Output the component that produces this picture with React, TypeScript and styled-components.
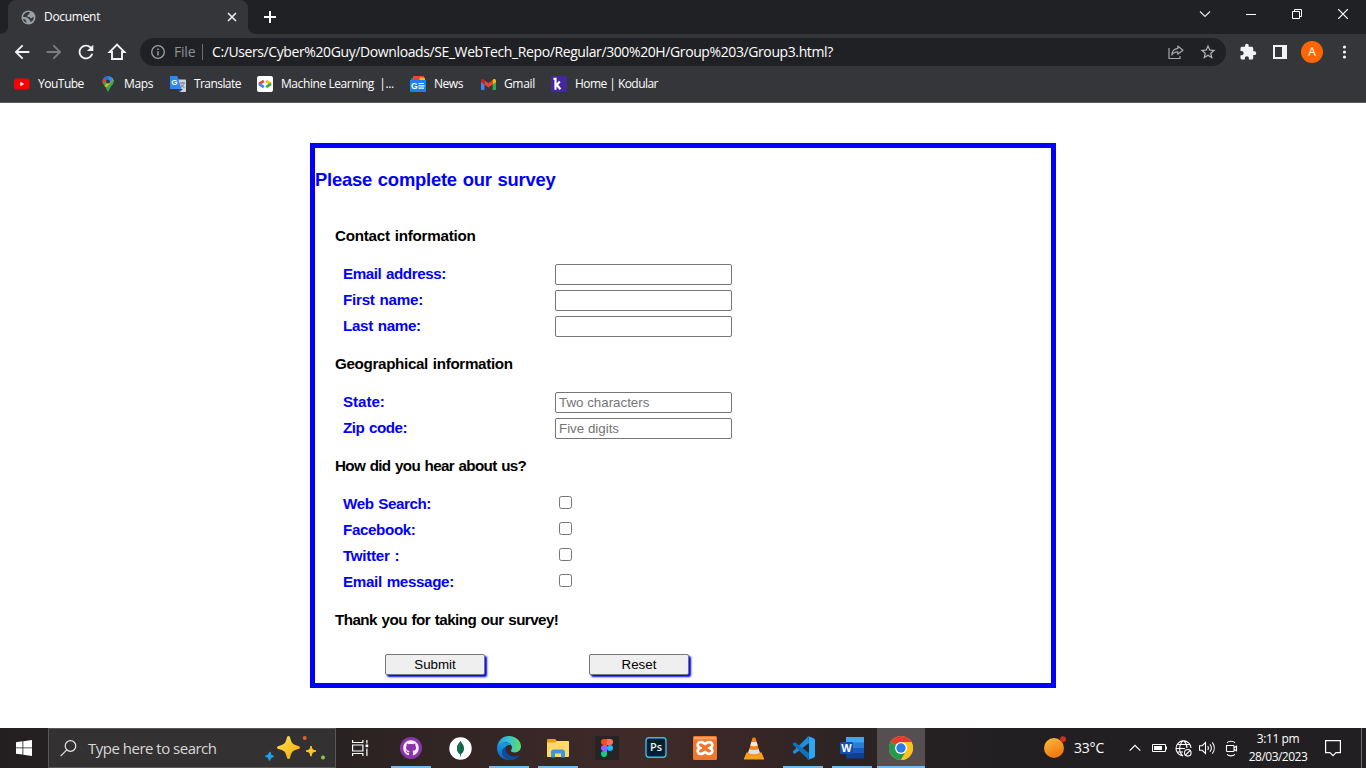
import React from 'react';
import styled, { createGlobalStyle } from 'styled-components';
import { FaGithub } from 'react-icons/fa';
import { MdExtension, MdStarBorder, MdRefresh, MdArrowBack, MdArrowForward } from 'react-icons/md';

const ui = '"Open Sans", "Noto Sans", sans-serif';
const form = '"Liberation Sans", Arial, sans-serif';

const GlobalStyle = createGlobalStyle`
  * { box-sizing: border-box; }
  body { margin: 0; background: #fff; overflow: hidden; }
`;

const Screen = styled.div`
  width: 1366px;
  height: 768px;
  display: flex;
  flex-direction: column;
  background: #fff;
  svg { display: block; flex: none; }
`;

const Txt = styled.span<{ $track?: number; $size?: number; $color?: string; $w?: number }>`
  font-family: ${ui};
  font-size: ${(p) => p.$size ?? 12}px;
  letter-spacing: ${(p) => p.$track ?? 0}px;
  color: ${(p) => p.$color ?? '#fff'};
  width: ${(p) => (p.$w ? `${p.$w}px` : 'auto')};
  flex: none;
  white-space: pre;
  line-height: 18px;
`;

const Spacer = styled.div<{ $w?: number }>`
  flex: ${(p) => (p.$w ? `0 0 ${p.$w}px` : '1')};
`;

/* ---------- browser chrome ---------- */
const TabStrip = styled.div`
  height: 34px;
  background: #202124;
  display: flex;
  padding-left: 8px;
`;

const Tab = styled.div`
  position: relative;
  width: 240px;
  background: #35363a;
  border-radius: 8px 8px 0 0;
  display: flex;
  align-items: center;
  padding: 0 10px 0 13px;
  &::before, &::after {
    content: '';
    position: absolute;
    bottom: 0;
    width: 8px;
    height: 8px;
  }
  &::before { left: -8px; background: radial-gradient(circle at 0 0, #202124 7.5px, #35363a 8.5px); }
  &::after { right: -8px; background: radial-gradient(circle at 100% 0, #202124 7.5px, #35363a 8.5px); }
`;

const TabLabel = styled(Txt)`margin-left: 8px;`;

const NewTab = styled.div`
  width: 44px;
  display: flex;
  align-items: center;
  justify-content: center;
`;

const WindowButtons = styled.div`
  display: flex;
  width: 184px;
  height: 28px;
`;

const WindowButton = styled.div`
  width: 46px;
  display: flex;
  align-items: center;
  justify-content: center;
`;

const Toolbar = styled.div`
  height: 36px;
  background: #35363a;
  display: flex;
  align-items: center;
  padding: 0 0 0 11px;
`;

const NavButtons = styled.div`
  display: flex;
  align-items: center;
  gap: 10px;
  width: 129px;
`;

const Omnibox = styled.div`
  width: 1086px;
  height: 28px;
  border-radius: 14px;
  background: #202124;
  display: flex;
  align-items: center;
  padding: 0 9px 0 11px;
`;

const Divider = styled.div`
  width: 1px;
  height: 16px;
  margin: 0 9px 0 7px;
  background: #6d6f73;
`;

const ToolbarRight = styled.div`
  display: flex;
  align-items: center;
  padding-left: 13px;
`;

const Avatar = styled.div`
  width: 22px;
  height: 22px;
  margin: 0 12px 0 14px;
  border-radius: 50%;
  background: #ff6600;
  color: #fff;
  font: 12px/22px ${ui};
  text-align: center;
`;

const Bookmarks = styled.div`
  height: 33px;
  background: #35363a;
  border-bottom: 1px solid #5b5c60;
  display: flex;
  align-items: center;
  padding: 0 0 4px 14px;
`;

const Bookmark = styled.div<{ $w: number; $gap: number }>`
  width: ${(p) => p.$w}px;
  display: flex;
  align-items: center;
  gap: ${(p) => p.$gap}px;
`;

/* ---------- survey page ---------- */
const Page = styled.main`
  height: 625px;
  padding: 40px 0 0 310px;
`;

const Survey = styled.form`
  width: 746px;
  height: 545px;
  border: 5px solid #00f;
  font-family: ${form};
`;

const Title = styled.h3<{ $track: number }>`
  margin: 0;
  color: #00f;
  font-size: 18.4px;
  line-height: 63px;
  word-spacing: 1px;
  letter-spacing: ${(p) => p.$track}px;
`;

const Heading = styled.h4<{ $track: number }>`
  margin: 0 0 0 20px;
  font-size: 15.2px;
  line-height: 50px;
  word-spacing: 1px;
  letter-spacing: ${(p) => p.$track}px;
`;

const Row = styled.div`
  height: 26px;
  display: flex;
  align-items: flex-start;
  padding-left: 28px;
`;

const Label = styled.label<{ $track: number }>`
  width: 212px;
  color: #00f;
  font-size: 15.2px;
  font-weight: bold;
  line-height: 26px;
  word-spacing: 1px;
  letter-spacing: ${(p) => p.$track}px;
`;

const Input = styled.input`
  width: 177px;
  height: 21px;
  margin: 3px 0 0;
  padding: 1px 3px;
  border: 1px solid #767676;
  border-radius: 2px;
  font: 13.333px ${form};
  outline: none;
  &::placeholder { color: #757575; }
`;

const Check = styled.input.attrs({ type: 'checkbox' })`
  width: 13px;
  height: 13px;
  margin: 5px 0 0 4px;
`;

const Actions = styled.div`
  display: flex;
  gap: 104px;
  padding: 9px 0 0 70px;
`;

const Button = styled.button`
  width: 100px;
  height: 21px;
  padding: 0;
  border: 1px solid #767676;
  border-radius: 2px;
  background: #efefef;
  box-shadow: 2px 2px 2px #00f;
  font: 13.333px/18px ${form};
  color: #000;
`;

/* ---------- taskbar ---------- */
const Taskbar = styled.footer`
  height: 40px;
  display: flex;
  background: linear-gradient(90deg, #231f21 0%, #2a2222 25%, #372726 38%, #402b28 47%, #372726 55%, #2a2223 64%, #211f22 73%, #211f22 100%);
`;

const Start = styled.div`
  width: 48px;
  display: flex;
  align-items: center;
  justify-content: center;
`;

const Search = styled.div`
  width: 288px;
  border: 1px solid #5a5858;
  background: #333132;
  display: flex;
  align-items: center;
  padding-left: 11px;
`;

const SearchLabel = styled(Txt)`margin-left: 11px;`;

const TaskView = styled(Start)`
  margin-right: 3px;
  padding-left: 2px;
`;

const Apps = styled.div`
  display: flex;
  gap: 1px;
`;

const AppButton = styled.div<{ $open?: boolean; $active?: boolean }>`
  width: 48px;
  height: 40px;
  display: flex;
  align-items: center;
  justify-content: center;
  background: ${(p) =>
    [
      p.$open && `linear-gradient(#76b9ed, #76b9ed) center bottom / ${p.$active ? 48 : 40}px 2px no-repeat`,
      p.$active && 'linear-gradient(#554f52, #554f52)',
    ]
      .filter(Boolean)
      .join(', ') || 'none'};
`;

const Tray = styled.div`
  display: flex;
  align-items: center;
  padding-right: 4px;
`;

const Temp = styled(Txt)`margin: 0 25px 0 8px;`;

const Clock = styled.div`
  width: 80px;
  margin-right: 7px;
  display: flex;
  flex-direction: column;
  align-items: center;
`;

const ShowDesktop = styled.div`
  width: 1px;
  height: 40px;
  margin-left: 20px;
  background: #6b696b;
`;

/* ---------- drawings ---------- */
const GlobeTab = () => (
  <svg width="15" height="15" viewBox="0 0 15 15">
    <circle cx="7.5" cy="7.5" r="7" fill="#9aa0a6" />
    <path d="M6 2.2c1.500-.6 2.800-.2 3 .6-.2.900-1.400.8-1.500 1.800 0 .8-1.500.7-1.400 1.700.8.900 2.500.3 3.100 1.400.4.900 1.700.6 2 0 .5-.7 1.300-.6 1.700-.3-.3 2-1.400 3.600-3.200 4.500-.2-1.200-1.300-1.300-1.300-2.300.1-1.300-1.500-1.200-2-1.900-.8-.8-3-.3-4.300-.9C2 5 3.500 3 6 2.200z" fill="#35363a" />
    <path d="M2 9c1.500 0 2.900.6 3 1.800.1.800.9 1 .9 2C4 12.500 2.500 11 2 9z" fill="#35363a" />
  </svg>
);

const Home = () => (
  <svg width="20" height="20" viewBox="0 0 20 20">
    <path d="M10 2.600L2.600 10H5v7h10v-7h2.400z" fill="none" stroke="#f1f3f4" strokeWidth="1.900" />
  </svg>
);

const YouTube = () => (
  <svg width="16" height="12" viewBox="0 0 16 12">
    <rect x="0" y="0.500" width="15.500" height="11" rx="2.600" fill="#f00" />
    <path d="M6.300 3.700v4.600L10.200 6z" fill="#fff" />
  </svg>
);

const MapsPin = () => (
  <svg width="12" height="16" viewBox="0 0 12 16">
    <path d="M6 15.500c-.7 0-.8-2.400-2-4C2.500 9.600.5 8.400.5 5.600a5.500 5.500 0 0 1 11 0c0 2.800-2 4-3.500 5.900-1.200 1.600-1.300 4-2 4z" fill="#34a853" />
    <path d="M1.800 2.200A5.500 5.500 0 0 1 7.700.4L2.300 6.800z" fill="#1a73e8" />
    <path d="M.5 5.600c0-1.300.5-2.500 1.300-3.400L4 4 1.300 8.400A5.300 5.300 0 0 1 .5 5.600z" fill="#ea4335" />
    <path d="M8 4.100L10.200 2c1 1 1.300 2.300 1.300 3.600L4 11.500 2.600 9.900z" fill="#fbbc04" />
    <path d="M7.700.4c1.600.4 3 1.800 3.500 3.200L8 7 6 3z" fill="#4285f4" />
    <path d="M11.200 3.700c.8 3-.5 4.700-2 6.400C7.500 12 7 15.500 6 15.500S5 13 4 11.500z" fill="#34a853" />
    <circle cx="6" cy="5.600" r="2" fill="#35363a" />
  </svg>
);

const Translate = () => (
  <svg width="16" height="16" viewBox="0 0 16 16">
    <path d="M6 3.500h9.200c.5 0 .8.300.8.800v10.900c0 .5-.3.800-.8.800H9.800z" fill="#d2d5da" />
    <path d="M9.800 16L13 13H8.500z" fill="#174ea6" />
    <path d="M1 0h6.300l4.200 13H1c-.6 0-1-.4-1-1V1c0-.6.4-1 1-1z" fill="#2b88f5" />
    <text x="1.300" y="9.300" fill="#fff" fontFamily={form} fontWeight="700" fontSize="8">G</text>
    <path d="M10 7h5M12.400 6v1M14 7.200c-.5 2-1.800 3.400-3.200 4.300M11.200 8.400c.5 1.300 1.700 2.600 3.300 3.300" stroke="#637080" strokeWidth=".9" fill="none" />
  </svg>
);

const CodeDev = () => (
  <svg width="16" height="16" viewBox="0 0 16 16">
    <rect width="16" height="16" rx="2" fill="#fff" />
    <path d="M6.800 4.800L2 8.200" stroke="#ea4335" strokeWidth="2.700" />
    <path d="M2 7.800l4.800 3.400" stroke="#4285f4" strokeWidth="2.700" />
    <path d="M9.200 4.800L14 8.200" stroke="#fbbc04" strokeWidth="2.700" />
    <path d="M14 7.800l-4.800 3.400" stroke="#34a853" strokeWidth="2.700" />
  </svg>
);

const News = () => (
  <svg width="16" height="16" viewBox="0 0 16 16">
    <path d="M1 2.200L10 1v4H1z" fill="#0c9d58" />
    <path d="M3 0h11l1 5H3z" fill="#ea4335" />
    <path d="M10 1.200l5 .8v3H9z" fill="#fbbc04" />
    <path d="M0 4h16v11c0 .6-.4 1-1 1H1c-.6 0-1-.4-1-1z" fill="#1a82f7" />
    <text x="1" y="13" fill="#fff" fontFamily={form} fontWeight="700" fontSize="8.500">G</text>
    <path d="M8.500 7.500H14M8.500 9.800h6M8.500 12.200H14" stroke="#fff" strokeWidth="1.200" />
  </svg>
);

const Gmail = () => (
  <svg width="15" height="11" viewBox="0 0 15 11">
    <path d="M0 2v8c0 .600.400 1 1 1h2.400V4.500z" fill="#4285f4" />
    <path d="M15 2v8c0 .600-.400 1-1 1h-2.400V4.500z" fill="#34a853" />
    <path d="M11.600 1.300V5.500L15 3V1.700C15 .1 13.200-.4 12.200.5z" fill="#fbbc04" />
    <path d="M3.400 5.500V1.300L7.500 4.300l4.100-3v4.200L7.500 8.600z" fill="#ea4335" />
    <path d="M0 1.700V3l3.400 2.500V1.300L2.800.5C1.800-.4 0 .1 0 1.700z" fill="#c5221f" />
  </svg>
);

const Kodular = () => (
  <svg width="16" height="16" viewBox="0 0 16 16">
    <rect width="16" height="16" rx="1.500" fill="#4527a0" />
    <path d="M2.500 2.800h2v10.900M5.200 9.500l3.600-4M5.600 8.500l3.800 4.800" stroke="#fff" strokeWidth="2.200" fill="none" />
  </svg>
);

const Share = () => (
  <svg width="16" height="16" viewBox="0 0 16 16" fill="none" stroke="#a5a8ac" strokeWidth="1.200">
    <path d="M1 4v10.500h11V12" />
    <path d="M9.800 2L15 6.200l-5.200 4V7.800C7 7.800 5 8.800 3.800 11 4 7.600 6 4.900 9.800 4.400z" strokeLinejoin="round" />
  </svg>
);

const Sparkles = () => (
  <svg width="62" height="30" viewBox="0 0 62 30">
    <defs>
      <linearGradient id="gold" x1="0" y1="0" x2="1" y2="1">
        <stop offset="0" stopColor="#ffe45c" />
        <stop offset="1" stopColor="#f5a800" />
      </linearGradient>
    </defs>
    <path d="M24.500 3c1.200 0 1.600 1.200 2 3 .9 3.600 2 5.200 5.500 6.200 2.400.7 4 1 4 2.300s-1.600 1.700-4 2.300c-3.500 1-4.600 2.700-5.500 6.300-.4 1.800-.8 3-2 3s-1.600-1.200-2-3c-.9-3.600-2-5.300-5.500-6.300-2.400-.6-4-1-4-2.300s1.600-1.600 4-2.300c3.500-1 4.600-2.600 5.500-6.200.4-1.800.8-3 2-3z" fill="url(#gold)" />
    <path d="M47 13c.8 3.500 1.600 4.200 5 5-3.400.9-4.200 1.700-5 5.200-.8-3.500-1.600-4.300-5-5.200 3.400-.8 4.200-1.500 5-5z" fill="#ffc928" stroke="#ffc928" />
    <path d="M6 19.500l.7 2.600 2.500 1.200-2.400 1.100-1.300 2.600-1-2.600-2.700-1.300 2.500-.8z" fill="#1ea0e8" stroke="#1ea0e8" strokeWidth="1.500" strokeLinejoin="round" />
    <circle cx="40.700" cy="5" r="2" fill="#e8602c" />
    <circle cx="59" cy="24.500" r="2" fill="#8bc940" />
  </svg>
);

const Github = styled.div`
  width: 22px;
  height: 22px;
  border-radius: 50%;
  background: #8b35a8;
  color: #f6eef8;
  display: flex;
  align-items: center;
  justify-content: center;
`;

const Mongo = () => (
  <svg width="23" height="23" viewBox="0 0 23 23">
    <circle cx="11.500" cy="11.500" r="11.200" fill="#fff" />
    <path d="M11.500 4c.5 1.500 3.500 3.500 3.500 7.500 0 3-1.500 4.700-3 5.700l-.2 2.300h-.6l-.2-2.300c-1.500-1-3-2.700-3-5.700 0-4 3-6 3.500-7.500z" fill="#116149" />
    <path d="M11.500 4c-.5 1.500-3.500 3.500-3.500 7.500 0 3 1.500 4.700 3 5.700l.5-1z" fill="#13734e" />
  </svg>
);

const Edge = () => (
  <svg width="24" height="24" viewBox="0 0 24 24">
    <defs>
      <linearGradient id="edgeTop" x1="0" y1=".5" x2="1" y2=".5">
        <stop offset="0" stopColor="#2a9fe0" />
        <stop offset=".5" stopColor="#35c5cf" />
        <stop offset="1" stopColor="#64dc62" />
      </linearGradient>
      <linearGradient id="edgeLow" x1="0" y1="0" x2="0" y2="1">
        <stop offset="0" stopColor="#1b9de2" />
        <stop offset="1" stopColor="#1160b8" />
      </linearGradient>
    </defs>
    <path d="M.1 11.500C.6 4.800 5.700 0 12 0c7 0 12 5.200 12 10.300 0 3.900-3 6.200-6.200 6.200-2.500 0-4-.9-4-1.700 0-.6 1.200-1.200 1.200-3.200C15 9 12 6.300 8.300 6.300 4 6.300.8 9 .1 11.500z" fill="url(#edgeTop)" />
    <path d="M.1 11.500C.8 8.500 4 6.300 8 6.300c3 0 5 1.300 6 2.700-4-.7-6.500 2-6.500 5.500 0 5 4.500 9 10 8-1.600 1-3.500 1.500-5.500 1.500C5 24-.4 18.300.1 11.500z" fill="url(#edgeLow)" />
    <path d="M9 11c-1.500 5 2.500 9.400 8 9.400 2 0 3.600-.5 5-1.200.5-.2.8.2.500.6C20.400 22.600 17.300 24 14 24c-5 0-9-3.500-9-8 0-2.300 1.700-4.100 4-5z" fill="#0d4a97" />
  </svg>
);

const Explorer = () => (
  <svg width="22" height="19" viewBox="0 0 22 19">
    <path d="M0 1.200C0 .5.500 0 1.200 0h7l2 2.500H0z" fill="#e5a50a" />
    <path d="M0 2h21c.6 0 1 .4 1 1v14c0 .6-.4 1-1 1H1c-.6 0-1-.4-1-1z" fill="#ffd968" />
    <path d="M0 2h9v1.500H0z" fill="#e5a50a" />
    <path d="M4 18.500V13c0-1.500 1-2.500 2.500-2.500h9c1.500 0 2.500 1 2.500 2.500v5.500h-4v-4H8v4z" fill="#3a97dc" />
  </svg>
);

const Figma = () => (
  <svg width="24" height="24" viewBox="0 0 24 24">
    <rect width="24" height="24" fill="#252526" />
    <path d="M12 3H9a3 3 0 0 0 0 6h3z" fill="#f24e1e" />
    <path d="M12 3h3a3 3 0 0 1 0 6h-3z" fill="#ff7262" />
    <path d="M12 9H9a3 3 0 0 0 0 6h3z" fill="#a259ff" />
    <circle cx="15" cy="12" r="3" fill="#1abcfe" />
    <path d="M12 15H9a3 3 0 1 0 3 3z" fill="#0acf83" />
  </svg>
);

const Photoshop = () => (
  <svg width="22" height="22" viewBox="0 0 22 22">
    <rect x="1" y="0.700" width="20" height="19.600" rx="3" fill="#071d2b" stroke="#34bdf0" strokeWidth="1.400" />
    <text x="11" y="14.300" textAnchor="middle" fontFamily={ui} fontWeight="600" fontSize="11" fill="#e8f4fb">Ps</text>
  </svg>
);

const Xampp = () => (
  <svg width="24" height="24" viewBox="0 0 24 24">
    <rect width="24" height="24" rx="1.500" fill="#f0762b" />
    <rect x="1" y="1" width="22" height="2.500" fill="#f9a065" />
    <path d="M8.200 6.200C3.800 5.700 3.800 11 7 12c-3.200 1-3.200 6.300 1.200 5.800 2 0 2.800-1.600 3.800-1.600s1.800 1.600 3.800 1.600c4.400.5 4.400-4.800 1.200-5.800 3.200-1 3.200-6.300-1.200-5.800-2 0-2.800 1.600-3.800 1.600S10.200 6.200 8.200 6.200z" fill="none" stroke="#fff" strokeWidth="2.700" />
    <path d="M9 12h6" stroke="#f0762b" strokeWidth="2" />
  </svg>
);

const Vlc = () => (
  <svg width="22" height="23" viewBox="0 0 22 23">
    <path d="M3.500 15.500h15L21 21.500c.2.600 0 1-.7 1H1.700c-.7 0-.9-.4-.7-1z" fill="#f9a01b" />
    <path d="M9.300 1.500C9.700.2 12.300.2 12.700 1.500L17 16.500c-1.500 2.400-10.500 2.400-12 0z" fill="#f7821b" />
    <path d="M8.300 5h5.400l1 3.500c-1.500 1-5.900 1-7.400 0z" fill="#ece9e6" />
    <path d="M6.300 12c2 1.200 7.400 1.200 9.400 0l1.100 3.800c-2.600 2-9 2-11.600 0z" fill="#e1dfdd" />
  </svg>
);

const VsCode = () => (
  <svg width="24" height="24" viewBox="0 0 24 24">
    <path d="M17.500.3L2 15.200c-.4.400-.4.900 0 1.200l1.200 1.100c.3.300.8.300 1.100 0L18 7z" fill="#1d8fdc" />
    <path d="M17.500 23.700L2 8.800c-.4-.4-.4-.9 0-1.200l1.200-1.100c.3-.3.800-.3 1.100 0L18 17z" fill="#1172b8" />
    <path d="M17.500.3l5.600 2.300c.5.300.9.700.9 1.300v16.200c0 .6-.4 1-.9 1.300l-5.600 2.300c-.6.200-1 0-1.400-.3.700.4 1.900.2 1.900-1V1.600c0-1.200-1.200-1.400-1.900-1 .4-.3.800-.5 1.400-.3z" fill="#2ba8f3" />
  </svg>
);

const Word = () => (
  <svg width="24" height="22" viewBox="0 0 24 22">
    <rect x="6" y="0" width="18" height="6" fill="#41a5ee" />
    <rect x="6" y="5.500" width="18" height="5.500" fill="#2b7cd3" />
    <rect x="6" y="11" width="18" height="5.500" fill="#185abd" />
    <rect x="6" y="16" width="18" height="5.500" fill="#103f91" />
    <rect x="0" y="5" width="13" height="12" rx="1" fill="#174fae" />
    <text x="6.500" y="14.700" textAnchor="middle" fontFamily={form} fontWeight="700" fontSize="11" fill="#fff">W</text>
  </svg>
);

const Chrome = () => (
  <svg width="24" height="24" viewBox="0 0 24 24">
    <circle cx="12" cy="12" r="12" fill="#fcc31e" />
    <path d="M12 12L1.600 6A12 12 0 0 1 22.400 6z" fill="#e33b2e" />
    <path d="M1.600 6A12 12 0 0 0 12 24l5.200-9z" fill="#249a4a" />
    <path d="M12 6h10.400A12 12 0 0 1 12 24l5.200-9z" fill="#fcc31e" />
    <circle cx="12" cy="12" r="6" fill="#fff" />
    <circle cx="12" cy="12" r="4.700" fill="#2c7be9" />
  </svg>
);

const Sun = () => (
  <svg width="22" height="24" viewBox="0 0 22 24">
    <defs>
      <linearGradient id="sun" x1=".2" y1="0" x2=".7" y2="1">
        <stop offset="0" stopColor="#fbb83a" />
        <stop offset="1" stopColor="#f2700d" />
      </linearGradient>
    </defs>
    <circle cx="10" cy="12" r="10" fill="url(#sun)" />
    <circle cx="19" cy="3.200" r="3" fill="#cf2f20" />
  </svg>
);

const Battery = () => (
  <svg width="16" height="16" viewBox="0 0 16 16">
    <path d="M.5 4.500h13v7H.5zM14.500 6.500v3" fill="none" stroke="#fff" />
    <rect x="2" y="6" width="8" height="4" fill="#fff" />
  </svg>
);

const NetGlobe = () => (
  <svg width="17" height="17" viewBox="0 0 17 17" fill="none" stroke="#fff" strokeWidth="1.100">
    <path d="M16 8a7.500 7.500 0 1 0-8 7.900M.5 8.500H10M1.800 4.500h13M1.800 12H8M8.300.7C3.500 5 3.500 12 8 16M8.700.7C11 3 12 5.500 12 8" />
    <circle cx="12.800" cy="12.800" r="3.300" />
    <path d="M10.500 15.100l4.600-4.600" />
  </svg>
);

const Speaker = () => (
  <svg width="17" height="16" viewBox="0 0 17 16" fill="none" stroke="#fff" strokeWidth="1.100">
    <path d="M.5 5.700h2.700L6.500 2.500v11L3.200 10.300H.5z" />
    <path d="M8.700 6c.8 1.200.8 2.800 0 4M11 4.200c1.600 2.200 1.600 5.400 0 7.600M13.300 2.400c2.600 3.300 2.600 7.900 0 11.200" />
  </svg>
);

const MeetNow = () => (
  <svg width="13" height="17" viewBox="0 0 13 17" fill="none" stroke="#fff" strokeWidth="1.100">
    <path d="M1.500 5.500h6.700c.5 0 .8.300.8.800v4.400c0 .5-.3.800-.8.800H2.300c-.5 0-.8-.3-.8-.800zM9 7.700l2.500-1.500v4.600L9 9.300M2 2.600C4 .7 8 .7 10 2.600M2 14.400c2 1.900 6 1.900 8 0" />
  </svg>
);

const InfoIcon = styled.svg`margin-right: 9px;`;

export default function App() {
  return (
    <Screen>
      <GlobalStyle />
      <TabStrip>
        <Tab>
          <GlobeTab />
          <TabLabel $track={-0.3}>Document</TabLabel>
          <Spacer />
          <svg width="12" height="12" viewBox="0 0 12 12"><path d="M2 2l8 8M10 2l-8 8" stroke="#e8eaed" strokeWidth="1.700" /></svg>
        </Tab>
        <NewTab>
          <svg width="12" height="12" viewBox="0 0 12 12"><path d="M6 0v12M0 6h12" stroke="#fff" strokeWidth="2" /></svg>
        </NewTab>
        <Spacer />
        <WindowButtons>
          <WindowButton><svg width="12" height="8" viewBox="0 0 12 8"><path d="M1 1.500l5 5 5-5" stroke="#e4e5e6" strokeWidth="1.200" fill="none" /></svg></WindowButton>
          <WindowButton><svg width="10" height="2" viewBox="0 0 10 2"><path d="M0 1.500h10" stroke="#fff" /></svg></WindowButton>
          <WindowButton><svg width="10" height="10" viewBox="0 0 10 10"><path d="M.5 2.500h7v7h-7zM2.500 2.500v-2h7v7h-2" stroke="#fff" fill="none" /></svg></WindowButton>
          <WindowButton><svg width="10" height="10" viewBox="0 0 10 10"><path d="M0 0l10 10M10 0L0 10" stroke="#fff" strokeWidth="1.200" /></svg></WindowButton>
        </WindowButtons>
      </TabStrip>

      <Toolbar>
        <NavButtons>
          <MdArrowBack size={22} color="#f1f3f4" />
          <MdArrowForward size={22} color="#7c7d80" />
          <MdRefresh size={22} color="#f1f3f4" />
          <Home />
        </NavButtons>
        <Omnibox>
          <InfoIcon width="14" height="14" viewBox="0 0 14 14">
            <circle cx="7" cy="7" r="6.300" stroke="#9aa0a6" strokeWidth="1.300" fill="none" />
            <path d="M7 6.200v4.200M7 3.500V5" stroke="#9aa0a6" strokeWidth="1.500" />
          </InfoIcon>
          <Txt $size={14} $track={-0.2} $color="#8c9196" $w={21}>File</Txt>
          <Divider />
          <Txt $size={14} $track={-0.396}>C:/Users/Cyber%20Guy/Downloads/SE_WebTech_Repo/Regular/300%20H/Group%203/Group3.html?</Txt>
          <Spacer />
          <Share />
          <Spacer $w={15} />
          <MdStarBorder size={18} color="#b4b7ba" />
        </Omnibox>
        <ToolbarRight>
          <MdExtension size={18} color="#f1f3f4" />
          <Spacer $w={16} />
          <svg width="14" height="14" viewBox="0 0 14 14"><path d="M0 0h14v14H0zM2 2v10h7V2z" fillRule="evenodd" fill="#f1f3f4" /></svg>
          <Avatar>A</Avatar>
          <svg width="20" height="14" viewBox="0 0 20 14" fill="#f1f3f4"><circle cx="9.500" cy="2" r="1.600" /><circle cx="9.500" cy="7" r="1.600" /><circle cx="9.500" cy="12" r="1.600" /></svg>
        </ToolbarRight>
      </Toolbar>

      <Bookmarks>
        <Bookmark $w={88} $gap={8}><YouTube /><Txt $track={-0.5}>YouTube</Txt></Bookmark>
        <Bookmark $w={68} $gap={10}><MapsPin /><Txt $track={-0.35}>Maps</Txt></Bookmark>
        <Bookmark $w={87} $gap={8}><Translate /><Txt $track={-0.57}>Translate</Txt></Bookmark>
        <Bookmark $w={153} $gap={8}><CodeDev /><Txt $track={-0.42}>Machine Learning  |...</Txt></Bookmark>
        <Bookmark $w={71} $gap={8}><News /><Txt $track={-0.45}>News</Txt></Bookmark>
        <Bookmark $w={70} $gap={8}><Gmail /><Txt $track={-0.35}>Gmail</Txt></Bookmark>
        <Bookmark $w={110} $gap={8}><Kodular /><Txt $track={-0.55}>Home | Kodular</Txt></Bookmark>
      </Bookmarks>

      <Page>
        <Survey onSubmit={(e) => e.preventDefault()}>
          <Title $track={-0.22}>Please complete our survey</Title>
          <Heading $track={-0.25}>Contact information</Heading>
          <Row><Label $track={-0.45}>Email address:</Label><Input /></Row>
          <Row><Label $track={-0.26}>First name:</Label><Input /></Row>
          <Row><Label $track={-0.34}>Last name:</Label><Input /></Row>
          <Heading $track={-0.34}>Geographical information</Heading>
          <Row><Label $track={-0.06}>State:</Label><Input placeholder="Two characters" /></Row>
          <Row><Label $track={-0.49}>Zip code:</Label><Input placeholder="Five digits" /></Row>
          <Heading $track={-0.66}>How did you hear about us?</Heading>
          <Row><Label $track={-0.43}>Web Search:</Label><Check /></Row>
          <Row><Label $track={-0.38}>Facebook:</Label><Check /></Row>
          <Row><Label $track={-0.3}>Twitter :</Label><Check /></Row>
          <Row><Label $track={-0.35}>Email message:</Label><Check /></Row>
          <Heading $track={-0.56}>Thank you for taking our survey!</Heading>
          <Actions>
            <Button type="submit">Submit</Button>
            <Button type="reset">Reset</Button>
          </Actions>
        </Survey>
      </Page>

      <Taskbar>
        <Start>
          <svg width="16" height="16" viewBox="0 0 16 16" fill="#fff"><path d="M0 2.200L6.500 1.300v6.200H0zM7.300 1.200L16 0v7.500H7.300zM0 8.300h6.500v6.300L0 13.700zM7.300 8.300H16V16l-8.700-1.300z" /></svg>
        </Start>
        <Search>
          <svg width="17" height="17" viewBox="0 0 17 17" fill="none" stroke="#e6e6e6" strokeWidth="1.200"><circle cx="10.500" cy="6" r="5.300" /><path d="M6.800 9.900L.6 16.200" /></svg>
          <SearchLabel $size={15} $track={-0.502} $color="#d8d8d8" $w={176}>Type here to search</SearchLabel>
          <Sparkles />
        </Search>
        <TaskView>
          <svg width="18" height="16" viewBox="0 0 18 16" fill="none" stroke="#fff" strokeWidth="1.200"><path d="M.6 0v2.500h10.300V0M.6 16v-2.500h10.300V16M.6 5h10.300v6H.6zM14.900 0v3.500M14.900 8.500V16" /><rect x="13.600" y="4.500" width="2.600" height="2.600" fill="#fff" stroke="none" /></svg>
        </TaskView>
        <Apps>
          <AppButton $open><Github><FaGithub size={16} /></Github></AppButton>
          <AppButton><Mongo /></AppButton>
          <AppButton $open><Edge /></AppButton>
          <AppButton $open><Explorer /></AppButton>
          <AppButton><Figma /></AppButton>
          <AppButton><Photoshop /></AppButton>
          <AppButton><Xampp /></AppButton>
          <AppButton><Vlc /></AppButton>
          <AppButton $open><VsCode /></AppButton>
          <AppButton $open><Word /></AppButton>
          <AppButton $open $active><Chrome /></AppButton>
        </Apps>
        <Spacer />
        <Tray>
          <Sun />
          <Temp $size={14} $track={-0.2} $w={30}>33°C</Temp>
          <svg width="12" height="8" viewBox="0 0 12 8"><path d="M.7 6.700L6 1.300l5.300 5.400" stroke="#fff" strokeWidth="1.200" fill="none" /></svg>
          <Spacer $w={11} />
          <Battery />
          <Spacer $w={7} />
          <NetGlobe />
          <Spacer $w={7} />
          <Speaker />
          <Spacer $w={9} />
          <MeetNow />
          <Clock>
            <Txt $track={-0.4}>3:11 pm</Txt>
            <Txt $track={-0.519}>28/03/2023</Txt>
          </Clock>
          <svg width="16" height="17" viewBox="0 0 16 17"><path d="M.6.600h14.800v12H11L8 15.600l-3-3H.6z" stroke="#fff" strokeWidth="1.200" fill="none" /></svg>
          <ShowDesktop />
        </Tray>
      </Taskbar>
    </Screen>
  );
}
